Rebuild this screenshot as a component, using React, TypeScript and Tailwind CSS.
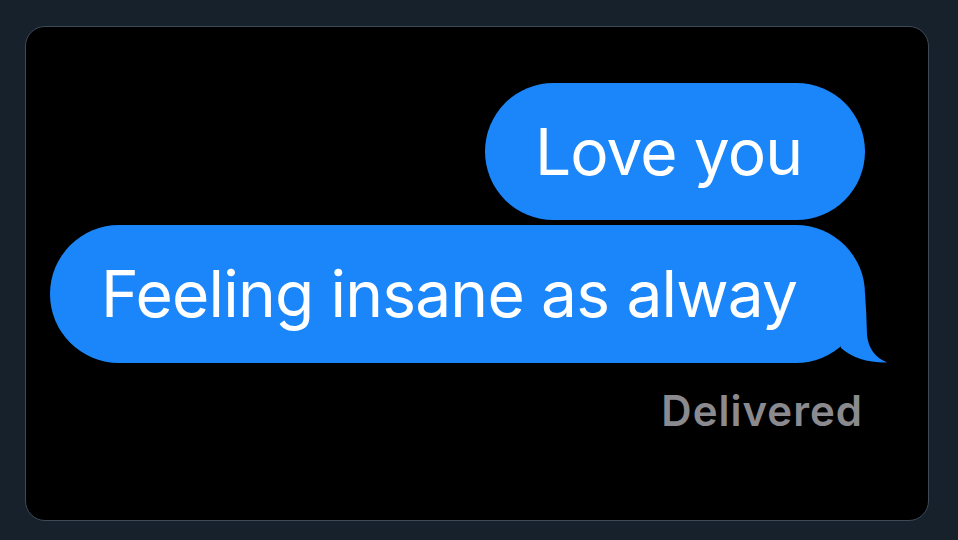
function BubbleTail() {
  return (
    <svg
      className="absolute bottom-0 right-[-23px]"
      width="88"
      height="70"
      viewBox="0 0 88 70"
    >
      <path d="M38 0 L65 0 Q66.5 20 67 42 Q69 62 87 69.5 Q58 70 41 55 Z" fill="#1b86f9" />
    </svg>
  );
}

function App() {
  return (
    <div className="w-[958px] h-[540px] bg-[#17212b] pt-[26px] pl-[25px]">
      <div
        className="w-[904px] h-[495px] bg-black border border-[#3d4a57] rounded-[20px] flex flex-col items-end pt-[56px] pr-[63px]"
        style={{ fontFamily: "Inter, 'Liberation Sans', sans-serif" }}
      >
        <div className="w-[380px] h-[137px] rounded-full bg-[#1b86f9] flex items-center pl-[50px] text-white text-[64px] leading-none tracking-[-0.9px]">
          Love you
        </div>
        <div className="relative mt-[5px] w-[815px] h-[138px] rounded-full bg-[#1b86f9] flex items-center pl-[51px] text-white text-[64px] leading-none tracking-[-0.8px]">
          Feeling insane as alway
          <BubbleTail />
        </div>
        <div className="mt-[27px] mr-[2px] text-[42px] leading-none font-semibold tracking-[1px] text-[#8a8a8f]">
          Delivered
        </div>
      </div>
    </div>
  );
}

export default App;
